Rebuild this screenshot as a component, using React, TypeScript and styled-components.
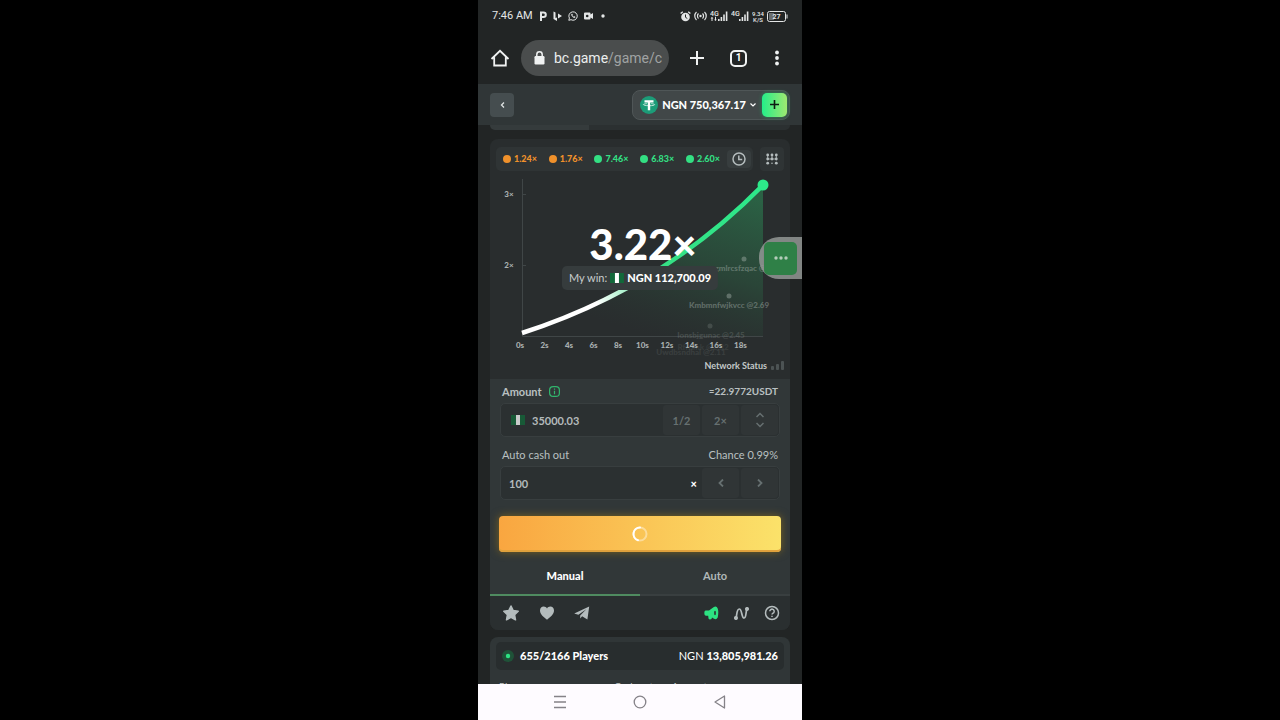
import React from 'react';
import styled, { createGlobalStyle } from 'styled-components';

const GlobalStyle = createGlobalStyle`
  * { box-sizing: border-box; }
  body { margin: 0; background: #000; font-family: Lato, "Open Sans", sans-serif; color: #fff; }
  button, input { font: inherit; color: inherit; border: 0; padding: 0; margin: 0; background: none; }
  button { display: flex; align-items: center; justify-content: center; cursor: pointer; }
  a { color: inherit; text-decoration: none; }
  svg { display: block; flex: none; }
`;

const Stage = styled.main`
  display: flex;
  justify-content: center;
  min-height: 100vh;
  background: #000;
`;

const Phone = styled.div`
  position: relative;
  display: flex;
  flex-direction: column;
  width: max(320px, 45vh);
  height: 100vh;
  overflow: hidden;
  background: #222525;
`;

const StatusBar = styled.div`
  display: flex;
  align-items: center;
  justify-content: space-between;
  height: 32px;
  flex: none;
  padding: 0 14px;
  color: #e4e6e6;
  font: 400 11px/16px Roboto, sans-serif;
`;

const StatusGroup = styled.div<{ $gap: number }>`
  display: flex;
  align-items: center;
  gap: ${(p) => p.$gap}px;
`;

const BrowserBar = styled.div`
  display: flex;
  align-items: center;
  height: 52px;
  flex: none;
  padding: 0 20px 0 12px;
`;

const Address = styled.label`
  display: flex;
  align-items: center;
  flex: 1;
  min-width: 0;
  height: 36px;
  margin: 0 20px 0 11px;
  padding: 0 7px 0 13px;
  gap: 9px;
  border-radius: 18px;
  background: #4a4d4d;
`;

const AddressText = styled.span`
  flex: 1;
  min-width: 0;
  overflow: hidden;
  white-space: nowrap;
  color: #a0a3a3;
  font: 400 14px/20px Roboto, sans-serif;
  b { font-weight: 400; color: #eceeee; }
`;

const BrowserActions = styled.div`
  display: flex;
  align-items: center;
  gap: 25px;
`;

const TabCount = styled.button`
  && {
    width: 17px;
    height: 17px;
    border: 2px solid #f0f2f2;
    border-radius: 5px;
    font: 700 10px/12px Roboto, sans-serif;
  }
`;

const Site = styled.div`
  flex: 1;
  min-height: 0;
  overflow: hidden;
`;

const SiteHeader = styled.header`
  display: flex;
  align-items: center;
  justify-content: space-between;
  height: 41px;
  padding: 0 12px;
  background: #303637;
`;

const BackButton = styled.button`
  && {
    width: 24px;
    height: 24px;
    border-radius: 4px;
    background: #454d4f;
    color: #dfe3e3;
  }
`;

const Wallet = styled.div`
  display: flex;
  align-items: center;
  height: 30px;
  padding: 0 2px 0 7px;
  gap: 6px;
  border: 1px solid #4f5657;
  border-radius: 8px;
  background: #414748;
  font-size: 11px;
  line-height: 16px;
  font-weight: 900;
`;

const Balance = styled.button`
  && { gap: 4px; }
`;

const Deposit = styled.button`
  && {
    width: 25px;
    height: 24px;
    border-radius: 5px;
    background: linear-gradient(90deg, #24ee89, #9fe871);
    color: #0e1a12;
    box-shadow: 0 0 4px #2b8a58;
  }
`;

const Content = styled.div`
  padding: 0 12px;
`;

const PreviousCard = styled.div`
  height: 5px;
  margin-bottom: 9px;
  border-radius: 0 0 5px 5px;
  background: linear-gradient(90deg, #353b3c 33%, #2b3031 33%);
`;

const Card = styled.section<{ $tone?: 'light' }>`
  overflow: hidden;
  border-radius: 8px;
  background: ${(p) => (p.$tone === 'light' ? '#303637' : '#292d2e')};
  margin-bottom: 7px;
`;

const HistoryRow = styled.div`
  display: flex;
  gap: 7px;
  padding: 8px 6px 0;
`;

const History = styled.div`
  display: flex;
  align-items: center;
  flex: 1;
  height: 24px;
  padding: 0 2px 0 7px;
  border-radius: 5px;
  background: #2f3435;
`;

const Results = styled.ul`
  display: flex;
  flex: 1;
  justify-content: space-between;
  list-style: none;
  margin: 0 7px 0 0;
  padding: 0;
`;

const Result = styled.li<{ $win?: boolean }>`
  display: flex;
  align-items: center;
  gap: 3px;
  color: ${(p) => (p.$win ? '#33df83' : '#f0912b')};
  font-size: 9px;
  line-height: 12px;
  font-weight: 900;
  &::before {
    content: '';
    width: 8px;
    height: 8px;
    border-radius: 50%;
    background: currentColor;
  }
`;

const SquareButton = styled.button<{ $plain?: boolean }>`
  && {
    width: 24px;
    height: ${(p) => (p.$plain ? 18 : 24)}px;
    border-radius: 4px;
    background: ${(p) => (p.$plain ? '#373d3e' : '#2f3435')};
    color: #b4bcbd;
  }
`;

const ChartArea = styled.div`
  position: relative;
`;

const ChartSvg = styled.svg`
  width: 100%;
  height: auto;
`;

const Multiplier = styled.div`
  position: absolute;
  top: 49px;
  left: 0;
  right: 0;
  padding-left: 6px;
  text-align: center;
  font-size: 42px;
  line-height: 48px;
  font-weight: 900;
`;

const Win = styled.div`
  position: absolute;
  top: 95px;
  left: 50%;
  transform: translateX(-50%);
  display: flex;
  align-items: center;
  gap: 3px;
  height: 24px;
  padding: 0 7px;
  border-radius: 5px;
  background: #363c3d;
  font-size: 11px;
  line-height: 16px;
  white-space: nowrap;
  color: #c8cdcd;
  strong { font-weight: 900; color: #fff; }
`;

const Network = styled.div`
  display: flex;
  align-items: center;
  justify-content: flex-end;
  gap: 4px;
  height: 22px;
  padding: 0 6px 4px;
  font-size: 9px;
  line-height: 14px;
  font-weight: 700;
  color: #c4c9c9;
`;

const Form = styled.form`
  padding: 4px 9px 0;
  background: #313738;
`;

const Field = styled.div`
  margin-bottom: 9px;
  padding: 0 1px;
`;

const FieldHead = styled.div`
  display: flex;
  justify-content: space-between;
  padding: 0 2px;
  margin-bottom: 3px;
  font-size: 11px;
  line-height: 17px;
  color: #b9c0c1;
`;

const FieldLabel = styled.label<{ $bold?: boolean }>`
  display: flex;
  align-items: center;
  gap: 7px;
  font-weight: ${(p) => (p.$bold ? 700 : 400)};
`;

const Converted = styled.span`
  font-size: 10px;
  font-weight: 700;
`;

const InputBox = styled.div`
  display: flex;
  align-items: center;
  height: 34px;
  padding: 0 1px 0 8px;
  gap: 2px;
  border: 1px solid #383e3f;
  border-radius: 5px;
  background: #2b3031;
  color: #b3babb;
  input {
    flex: 1;
    min-width: 0;
    height: 30px;
    outline: 0;
    font-size: 11px;
    font-weight: 700;
  }
`;

const InputFlag = styled.span`
  margin: 0 5px 0 2px;
`;

const Times = styled.span`
  margin-right: 3px;
  color: #fff;
  font-size: 11px;
  font-weight: 900;
`;

const Segment = styled.button`
  && {
    flex-direction: column;
    gap: 4px;
    width: 37px;
    height: 30px;
    border-radius: 3px;
    background: #303536;
    color: #667071;
    font-size: 11px;
    font-weight: 700;
  }
`;

const BetButton = styled.button`
  && {
    width: 100%;
    height: 36px;
    margin-top: 16px;
    border-radius: 4px;
    background: linear-gradient(90deg, #f9a640, #fbe26a);
    box-shadow: inset 0 -2px 0 #e0a13c, 0 0 8px #7a6422;
  }
`;

const Tabs = styled.div`
  display: flex;
  margin: 5px -9px 0;
`;

const Tab = styled.button<{ $active?: boolean }>`
  && {
    flex: 1;
    height: 39px;
    border-bottom: 2px solid ${(p) => (p.$active ? '#4f8b60' : '#393f40')};
    color: ${(p) => (p.$active ? '#fff' : '#b0b7b8')};
    font-size: 11px;
    font-weight: ${(p) => (p.$active ? 900 : 700)};
  }
`;

const CardFooter = styled.footer`
  display: flex;
  justify-content: space-between;
  align-items: center;
  height: 34px;
  padding: 0 10px 0 12px;
  background: #2a2f30;
  color: #b4bcbd;
`;

const IconRow = styled.div<{ $gap: number }>`
  display: flex;
  align-items: center;
  gap: ${(p) => p.$gap}px;
`;

const Summary = styled.div`
  display: flex;
  align-items: center;
  justify-content: space-between;
  height: 28px;
  margin: 5px 6px 9px;
  padding: 0 6px;
  border-radius: 5px;
  background: #282d2e;
  font-size: 11px;
  line-height: 16px;
  span { display: flex; align-items: center; gap: 6px; }
  strong { font-weight: 900; }
`;

const PlayersTable = styled.table`
  width: 100%;
  padding: 0 6px;
  border-spacing: 0;
  font-size: 10px;
  line-height: 14px;
  th { padding: 0 3px; text-align: left; font-weight: 400; color: #c1c6c6; }
  th:nth-child(1) { width: 40%; }
  th:nth-child(2) { width: 20%; }
`;

const NavBar = styled.nav`
  display: flex;
  align-items: center;
  justify-content: center;
  gap: 66px;
  height: 36px;
  flex: none;
  background: #fefbff;
  color: #858288;
`;

const FloatingHandle = styled.div`
  position: absolute;
  top: 237px;
  right: 0;
  display: flex;
  align-items: center;
  width: 43px;
  height: 42px;
  padding-left: 5px;
  border-radius: 20px 0 0 20px;
  background: rgba(150, 155, 153, 0.82);
`;

const ChatButton = styled.button`
  && {
    width: 33px;
    height: 33px;
    border-radius: 5px;
    background: #2f8047;
    color: #b5ccba;
  }
`;

const Flag = ({ dim }: { dim?: boolean }) => (
  <svg width="14" height="10" viewBox="0 0 14 10" opacity={dim ? 0.75 : 1} aria-hidden="true">
    <rect width="14" height="10" fill="#12683a" />
    <rect x="5" width="4" height="10" fill="#fff" />
  </svg>
);

const Chevron = ({ d, w = 6, h = 8, stroke = 1.5 }: { d: string; w?: number; h?: number; stroke?: number }) => (
  <svg width={w} height={h} viewBox={`0 0 ${w} ${h}`} fill="none" stroke="currentColor" strokeWidth={stroke} aria-hidden="true">
    <path d={d} />
  </svg>
);

const Signal = ({ arrows }: { arrows?: boolean }) => (
  <svg width="18" height="12" viewBox="0 0 18 12" fill="currentColor" aria-hidden="true">
    <text x="0" y="6" fontSize="7" fontWeight="500" fontFamily="Roboto, sans-serif">4G</text>
    {arrows && <path d="M2 6.800l1.400 1.600H2.500V11h-1V8.400H.6zM5.500 11l1.300-1.600H6V6.800H5v2.600h-.9z" />}
    <path d="M8 9h1.600v2H8zM10.600 7h1.600v4h-1.600zM13.200 4.500h1.600V11h-1.600zM15.800 1.500h1.600V11h-1.600z" />
  </svg>
);

const results = [
  { value: '1.24×', win: false },
  { value: '1.76×', win: false },
  { value: '7.46×', win: true },
  { value: '6.83×', win: true },
  { value: '2.60×', win: true },
];

const seconds = ['0s', '2s', '4s', '6s', '8s', '10s', '12s', '14s', '16s', '18s'];

const cashouts = [
  { x: 258, y: 97, name: 'gmlrcsfzqac @2.87', dotX: 254, dotY: 88, opacity: 0.42 },
  { x: 239, y: 134, name: 'Kmbmnfwjkvcc @2.69', dotX: 239, dotY: 125, opacity: 0.42 },
  { x: 221, y: 164, name: 'Ionsbjgunac @2.45', dotX: 220, dotY: 155, opacity: 0.2 },
  { x: 213, y: 176, name: 'Rfrnmk @2.32', dotX: 0, dotY: 0, opacity: 0.1 },
  { x: 201, y: 181, name: 'Uwdbsndhal @2.11', dotX: 0, dotY: 0, opacity: 0.12 },
];

const Chart = () => (
  <ChartSvg viewBox="0 0 300 186" role="img" aria-label="Multiplier over time">
    <defs>
      <linearGradient id="line" gradientUnits="userSpaceOnUse" x1="32" y1="162" x2="273" y2="14">
        <stop offset="0.28" stopColor="#fff" />
        <stop offset="0.54" stopColor="#35e085" />
        <stop offset="1" stopColor="#2de98a" />
      </linearGradient>
      <linearGradient id="fill" gradientUnits="userSpaceOnUse" x1="240" y1="20" x2="190" y2="175">
        <stop offset="0" stopColor="#2b6a48" stopOpacity="0.85" />
        <stop offset="0.5" stopColor="#2b5940" stopOpacity="0.55" />
        <stop offset="1" stopColor="#2b4037" stopOpacity="0" />
      </linearGradient>
    </defs>
    <path d="M32.500 8V165.500H273M33 23.500h3M33 94.500h3" fill="none" stroke="#404647" />
    <path d="M32 162Q172 117 273 14V165H32z" fill="url(#fill)" />
    <path d="M32 162Q172 117 273 14" fill="none" stroke="url(#line)" strokeWidth="4.500" />
    <circle cx="273" cy="14" r="5.500" fill="#2de98a" />
    <g fill="#a9b0b0" fontSize="8" fontWeight="900" textAnchor="middle">
      <text x="19" y="26">3×</text>
      <text x="19" y="97">2×</text>
      {seconds.map((s, i) => (
        <text key={s} x={30 + i * 24.5} y="177">{s}</text>
      ))}
    </g>
    <g fill="#a9b5af" fontSize="8" fontWeight="900" textAnchor="middle">
      {cashouts.map((c) => (
        <g key={c.name} opacity={c.opacity}>
          {c.dotX > 0 && <circle cx={c.dotX} cy={c.dotY} r="2.500" />}
          <text x={c.x} y={c.y + 3}>{c.name}</text>
        </g>
      ))}
    </g>
  </ChartSvg>
);

export default function App() {
  return (
    <Stage>
      <GlobalStyle />
      <Phone>
        <StatusBar>
          <StatusGroup $gap={6}>
            <span>7:46 AM</span>
            <svg width="8" height="10" viewBox="0 0 8 10" fill="none" stroke="currentColor" strokeWidth="2" aria-hidden="true">
              <path d="M2 10V1.500h2.500a2.300 2.300 0 010 4.600H2" />
            </svg>
            <svg width="9" height="10" viewBox="0 0 9 10" fill="currentColor" aria-hidden="true">
              <path d="M.5.500l2 1v5.600L4 6.500V10L.5 8zM5 2.500L9 5 5 7.500z" />
            </svg>
            <svg width="10" height="10" viewBox="0 0 10 10" fill="none" stroke="currentColor" aria-hidden="true">
              <path d="M.8 9.300l.6-2.200A4.200 4.200 0 113 8.700z" />
              <path d="M3.400 3c-.2 2 1.600 3.900 3.600 3.700l.2-.9-1.100-.5-.6.500c-.6-.3-1-.8-1.200-1.300l.4-.6-.4-1z" fill="currentColor" strokeWidth=".3" />
            </svg>
            <svg width="9" height="8" viewBox="0 0 9 8" aria-hidden="true">
              <path d="M0 1.500Q0 .5 1 .5h4.500q1 0 1 1v1L9 1v6L6.500 5.500v1q0 1-1 1H1q-1 0-1-1z" fill="currentColor" />
              <circle cx="3.200" cy="4" r="1.300" fill="#222525" />
            </svg>
            <svg width="10" height="4" viewBox="0 0 10 4" aria-hidden="true"><circle cx="4" cy="2" r="1.700" fill="currentColor" /></svg>
          </StatusGroup>
          <StatusGroup $gap={3}>
            <svg width="11" height="11" viewBox="0 0 11 11" aria-hidden="true">
              <circle cx="5.500" cy="6" r="4.300" fill="currentColor" />
              <path d="M.6 2.600L2.800.7M10.400 2.600L8.200.7" stroke="currentColor" strokeWidth="1.300" />
              <path d="M5.500 3.500V6.300L7.300 7.500" fill="none" stroke="#222525" />
            </svg>
            <svg width="13" height="10" viewBox="0 0 13 10" fill="none" stroke="currentColor" strokeWidth="1.200" aria-hidden="true">
              <circle cx="6.500" cy="5" r="1.200" fill="currentColor" stroke="none" />
              <path d="M4.500 2.500a3.500 3.500 0 000 5M8.500 2.500a3.500 3.500 0 010 5M2.500 1a5.500 5.500 0 000 8M10.500 1a5.500 5.500 0 010 8" />
            </svg>
            <Signal arrows />
            <Signal />
            <svg width="12" height="13" viewBox="0 0 12 13" fill="currentColor" fontFamily="Roboto, sans-serif" fontWeight="500" fontSize="6" textAnchor="middle" aria-hidden="true">
              <text x="6" y="6">9.34</text>
              <text x="6" y="12">K/S</text>
            </svg>
            <svg width="21" height="11" viewBox="0 0 21 11" aria-hidden="true">
              <rect x=".5" y=".5" width="18" height="10" rx="2" fill="none" stroke="currentColor" />
              <rect x="2" y="2" width="5" height="7" fill="#6b6e6e" />
              <path d="M19.500 3.500h1v4h-1z" fill="currentColor" />
              <text x="9.500" y="8" fill="currentColor" fontFamily="Roboto, sans-serif" fontSize="7" fontWeight="700" textAnchor="middle">27</text>
            </svg>
          </StatusGroup>
        </StatusBar>

        <BrowserBar>
          <button type="button" aria-label="Home">
            <svg width="20" height="18" viewBox="0 0 20 18" fill="none" stroke="#f0f2f2" strokeWidth="1.800" aria-hidden="true">
              <path d="M1.500 10L10 1.800 18.500 10M4.200 8.200V16.500H15.800V8.200" />
            </svg>
          </button>
          <Address>
            <svg width="11" height="14" viewBox="0 0 11 14" aria-hidden="true">
              <rect x=".5" y="5" width="10" height="8.500" rx="1.200" fill="#f0f2f2" />
              <path d="M2.800 5V3.500a2.700 2.700 0 015.400 0V5" fill="none" stroke="#f0f2f2" strokeWidth="1.500" />
            </svg>
            <AddressText><b>bc.game</b>/game/crash</AddressText>
          </Address>
          <BrowserActions>
            <button type="button" aria-label="New tab">
              <svg width="16" height="16" viewBox="0 0 16 16" stroke="#f0f2f2" strokeWidth="2" aria-hidden="true"><path d="M8 1v14M1 8h14" /></svg>
            </button>
            <TabCount type="button">1</TabCount>
            <button type="button" aria-label="Menu">
              <svg width="10" height="16" viewBox="0 0 10 16" fill="#f0f2f2" aria-hidden="true">
                <circle cx="5" cy="2.500" r="1.900" /><circle cx="5" cy="8" r="1.900" /><circle cx="5" cy="13.500" r="1.900" />
              </svg>
            </button>
          </BrowserActions>
        </BrowserBar>

        <Site>
          <SiteHeader>
            <BackButton type="button" aria-label="Back"><Chevron w={5} h={6} d="M4 .5L1.500 3 4 5.500" stroke={1.3} /></BackButton>
            <Wallet>
              <Balance type="button">
                <svg width="18" height="18" viewBox="0 0 18 18" aria-hidden="true">
                  <circle cx="9" cy="9" r="9" fill="#1c9c78" />
                  <path d="M4.500 4.300h9v2.300h-3.300v7.600H7.800V6.600H4.500z" fill="#fff" />
                  <path d="M6.800 7.600C2 8 2 9.600 9 9.700S16 8 11.200 7.600" fill="none" stroke="#fff" strokeWidth=".7" />
                </svg>
                <span>NGN 750,367.17</span>
                <Chevron w={6} h={4} d="M.5.500L3 3 5.500.5" stroke={1.2} />
              </Balance>
              <Deposit type="button" aria-label="Deposit">
                <svg width="9" height="9" viewBox="0 0 9 9" stroke="currentColor" strokeWidth="1.600" aria-hidden="true"><path d="M4.500 0v9M0 4.500h9" /></svg>
              </Deposit>
            </Wallet>
          </SiteHeader>

          <Content>
            <PreviousCard />
            <Card>
              <HistoryRow>
                <History>
                  <Results>
                    {results.map((r) => <Result key={r.value} $win={r.win}>{r.value}</Result>)}
                  </Results>
                  <SquareButton type="button" $plain aria-label="History">
                    <svg width="14" height="14" viewBox="0 0 14 14" fill="none" stroke="currentColor" strokeWidth="1.500" aria-hidden="true">
                      <circle cx="7" cy="7" r="6" /><path d="M6.800 3.500V7.500H10.200" />
                    </svg>
                  </SquareButton>
                </History>
                <SquareButton type="button" aria-label="Trends">
                  <svg width="12" height="12" viewBox="0 0 12 12" fill="currentColor" aria-hidden="true">
                    <path d="M1.700 2v4M6 2v4M10.300 2v4M1.500 6h9" stroke="currentColor" strokeWidth=".8" />
                    <circle cx="1.700" cy="2" r="1.400" /><circle cx="6" cy="2" r="1.400" /><circle cx="10.300" cy="2" r="1.400" />
                    <circle cx="1.700" cy="6" r="1.400" /><circle cx="6" cy="6" r="1.400" /><circle cx="10.300" cy="6" r="1.400" />
                    <circle cx="1.700" cy="10.200" r="1.400" /><circle cx="6" cy="10.200" r=".8" /><circle cx="10.300" cy="10.200" r="1.400" />
                  </svg>
                </SquareButton>
              </HistoryRow>

              <ChartArea>
                <Chart />
                <Multiplier>3.22×</Multiplier>
                <Win><span>My win:</span><Flag /><strong>NGN 112,700.09</strong></Win>
              </ChartArea>

              <Network>
                <span>Network Status</span>
                <svg width="13" height="10" viewBox="0 0 13 10" fill="#4c5354" aria-hidden="true">
                  <rect y="5" width="3" height="4" rx="1" /><rect x="5" y="3" width="3" height="6" rx="1" /><rect x="10" y="0" width="3" height="9" rx="1" />
                </svg>
              </Network>

              <Form onSubmit={(e) => e.preventDefault()}>
                <Field>
                  <FieldHead>
                    <FieldLabel htmlFor="amount" $bold>
                      Amount
                      <svg width="11" height="11" viewBox="0 0 11 11" fill="none" stroke="#31b56c" strokeWidth="1.200" aria-hidden="true">
                        <rect x=".6" y=".6" width="9.800" height="9.800" rx="3.500" /><path d="M5.500 2.500v1.300M5.500 4.800v3.500" />
                      </svg>
                    </FieldLabel>
                    <Converted>≈22.9772USDT</Converted>
                  </FieldHead>
                  <InputBox>
                    <InputFlag><Flag dim /></InputFlag>
                    <input id="amount" defaultValue="35000.03" />
                    <Segment type="button">1/2</Segment>
                    <Segment type="button">2×</Segment>
                    <Segment type="button" aria-label="Adjust amount">
                      <Chevron w={8} h={6} d="M.5 5L4 1.500 7.500 5" />
                      <Chevron w={8} h={6} d="M.5 1L4 4.500 7.500 1" />
                    </Segment>
                  </InputBox>
                </Field>
                <Field>
                  <FieldHead>
                    <FieldLabel htmlFor="cashout">Auto cash out</FieldLabel>
                    <span>Chance 0.99%</span>
                  </FieldHead>
                  <InputBox>
                    <input id="cashout" defaultValue="100" />
                    <Times>×</Times>
                    <Segment type="button" aria-label="Decrease"><Chevron d="M5 .5L1.500 4 5 7.500" stroke={1.8} /></Segment>
                    <Segment type="button" aria-label="Increase"><Chevron d="M1 .5L4.500 4 1 7.500" stroke={1.8} /></Segment>
                  </InputBox>
                </Field>
                <BetButton type="submit" aria-label="Bet in progress">
                  <svg width="16" height="16" viewBox="0 0 16 16" fill="none" strokeWidth="2" aria-hidden="true">
                    <circle cx="8" cy="8" r="6.500" stroke="#fff" opacity=".4" />
                    <path d="M6 14.200A6.500 6.500 0 018 1.500" stroke="#fff" strokeLinecap="round" />
                  </svg>
                </BetButton>
                <Tabs>
                  <Tab type="button" $active>Manual</Tab>
                  <Tab type="button">Auto</Tab>
                </Tabs>
              </Form>

              <CardFooter>
                <IconRow $gap={19}>
                  <button type="button" aria-label="Favourite">
                    <svg width="18" height="16" viewBox="0 0 18 16" fill="currentColor" stroke="currentColor" strokeWidth="1.500" strokeLinejoin="round" aria-hidden="true">
                      <path d="M9 1l2.200 4.600 5 .7-3.600 3.500.9 5L9 12.400l-4.500 2.400.9-5L1.800 6.300l5-.7z" />
                    </svg>
                  </button>
                  <button type="button" aria-label="Like">
                    <svg width="16" height="14" viewBox="0 0 16 14" fill="currentColor" aria-hidden="true">
                      <path d="M8 13.800C5 11.500 1 8.500 1 4.600 1 2.200 2.700.6 4.700.6 6.100.6 7.300 1.300 8 2.500 8.700 1.300 9.900.6 11.300.6c2 0 3.700 1.600 3.700 4 0 3.900-4 6.900-7 9.200z" />
                    </svg>
                  </button>
                  <button type="button" aria-label="Share">
                    <svg width="16" height="14" viewBox="0 0 16 14" fill="currentColor" aria-hidden="true">
                      <path d="M15.200.5L.2 7.400l4.200 1.400L12.300 3.300 6.200 9.400v3.200l1.900-2.300 5.300 3.200z" />
                    </svg>
                  </button>
                </IconRow>
                <IconRow $gap={15}>
                  <button type="button" aria-label="Sound">
                    <svg width="15" height="14" viewBox="0 0 15 14" aria-hidden="true">
                      <path d="M1.500 4.500H5L9.500 1.200Q12.500-.5 13.700 2.500T13.700 11.500Q12.500 14 10 12.800L8 11.500 7.500 13Q5.500 14 4.500 12.500L4.200 9.800H1.800Q.3 9.500.3 7t1.200-2.500z" fill="#2de282" />
                      <ellipse cx="11" cy="7" rx=".9" ry="2.300" fill="#2a2f30" />
                    </svg>
                  </button>
                  <button type="button" aria-label="Trend">
                    <svg width="15" height="13" viewBox="0 0 15 13" fill="none" stroke="currentColor" strokeWidth="1.700" aria-hidden="true">
                      <path d="M2 11C3 8.500 2.500 2 5.300 2S7.500 11 10 11 11.500 5 13 2" />
                      <circle cx="2" cy="11" r="1.200" fill="currentColor" /><circle cx="13" cy="2" r="1.200" fill="currentColor" />
                    </svg>
                  </button>
                  <button type="button" aria-label="Help">
                    <svg width="16" height="16" viewBox="0 0 16 16" fill="none" stroke="currentColor" strokeWidth="1.500" aria-hidden="true">
                      <circle cx="8" cy="8" r="6.500" /><path d="M5.800 6.300a2.200 2.200 0 114 1.300C9 8.300 8 8.400 8 9.600M8 10.700v1.400" />
                    </svg>
                  </button>
                </IconRow>
              </CardFooter>
            </Card>

            <Card $tone="light">
              <Summary>
                <span>
                  <svg width="12" height="12" viewBox="0 0 12 12" aria-hidden="true">
                    <circle cx="6" cy="6" r="6" fill="#1f5238" /><circle cx="6" cy="6" r="2.200" fill="#2de282" />
                  </svg>
                  <strong>655/2166 Players</strong>
                </span>
                <div>NGN <strong>13,805,981.26</strong></div>
              </Summary>
              <PlayersTable>
                <thead>
                  <tr><th>Player</th><th>Cash out</th><th>Amount</th></tr>
                </thead>
              </PlayersTable>
            </Card>
          </Content>
        </Site>

        <NavBar>
          <button type="button" aria-label="Recent apps">
            <svg width="14" height="14" viewBox="0 0 14 14" stroke="currentColor" strokeWidth="1.300" aria-hidden="true"><path d="M1 1.500h12M1 7h12M1 12.500h12" /></svg>
          </button>
          <button type="button" aria-label="Home screen">
            <svg width="14" height="14" viewBox="0 0 14 14" fill="none" stroke="currentColor" strokeWidth="1.300" aria-hidden="true"><circle cx="7" cy="7" r="5.800" /></svg>
          </button>
          <button type="button" aria-label="Back">
            <svg width="14" height="14" viewBox="0 0 14 14" fill="none" stroke="currentColor" strokeWidth="1.300" strokeLinejoin="round" aria-hidden="true"><path d="M11.500 1v12L2 7z" /></svg>
          </button>
        </NavBar>

        <FloatingHandle>
          <ChatButton type="button" aria-label="Open chat">
            <svg width="14" height="4" viewBox="0 0 14 4" fill="currentColor" aria-hidden="true"><circle cx="2" cy="2" r="1.700" /><circle cx="7" cy="2" r="1.700" /><circle cx="12" cy="2" r="1.700" /></svg>
          </ChatButton>
        </FloatingHandle>
      </Phone>
    </Stage>
  );
}
